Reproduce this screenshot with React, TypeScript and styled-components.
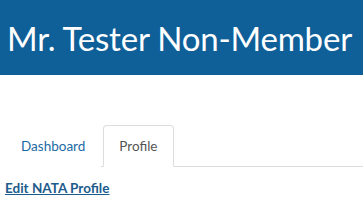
import React from "react";
import styled, { createGlobalStyle } from "styled-components";

const GlobalStyle = createGlobalStyle`
  body {
    margin: 0;
    background: #fff;
    font-family: "Lato", "Open Sans", sans-serif;
  }
`;

const Header = styled.header`
  background-color: #0f5f98;
  height: 75px;
  display: flex;
  align-items: center;
  padding: 0 7px;
`;

const Title = styled.h1`
  margin: 0;
  font-size: 33px;
  font-weight: 400;
  color: #fff;
  white-space: nowrap;
  letter-spacing: -0.2px;
`;

const Main = styled.main`
  padding: 50px 0 0 5px;
`;

const TabList = styled.ul`
  display: flex;
  margin: 0;
  padding: 0;
  list-style: none;
  border-bottom: 1px solid #ddd;
`;

const Tab = styled.li<{ active?: boolean }>`
  margin-right: 2px;
  margin-bottom: -1px;
  padding: 10px 15px;
  line-height: 20px;
  font-size: 13.5px;
  border: 1px solid ${(p) => (p.active ? "#ddd" : "transparent")};
  border-bottom-color: ${(p) => (p.active ? "#fff" : "transparent")};
  border-radius: 4px 4px 0 0;
  background: #fff;
  color: ${(p) => (p.active ? "#555" : "#1c6aa5")};
`;

const EditLink = styled.a`
  display: inline-block;
  margin-top: 13px;
  font-size: 13.5px;
  font-weight: 700;
  color: #1d5b8c;
  text-decoration: underline;
`;

export default function App() {
  return (
    <>
      <GlobalStyle />
      <Header>
        <Title>Mr. Tester Non-Member</Title>
      </Header>
      <Main>
        <TabList>
          <Tab>Dashboard</Tab>
          <Tab active>Profile</Tab>
        </TabList>
        <EditLink href="#">Edit NATA Profile</EditLink>
      </Main>
    </>
  );
}
